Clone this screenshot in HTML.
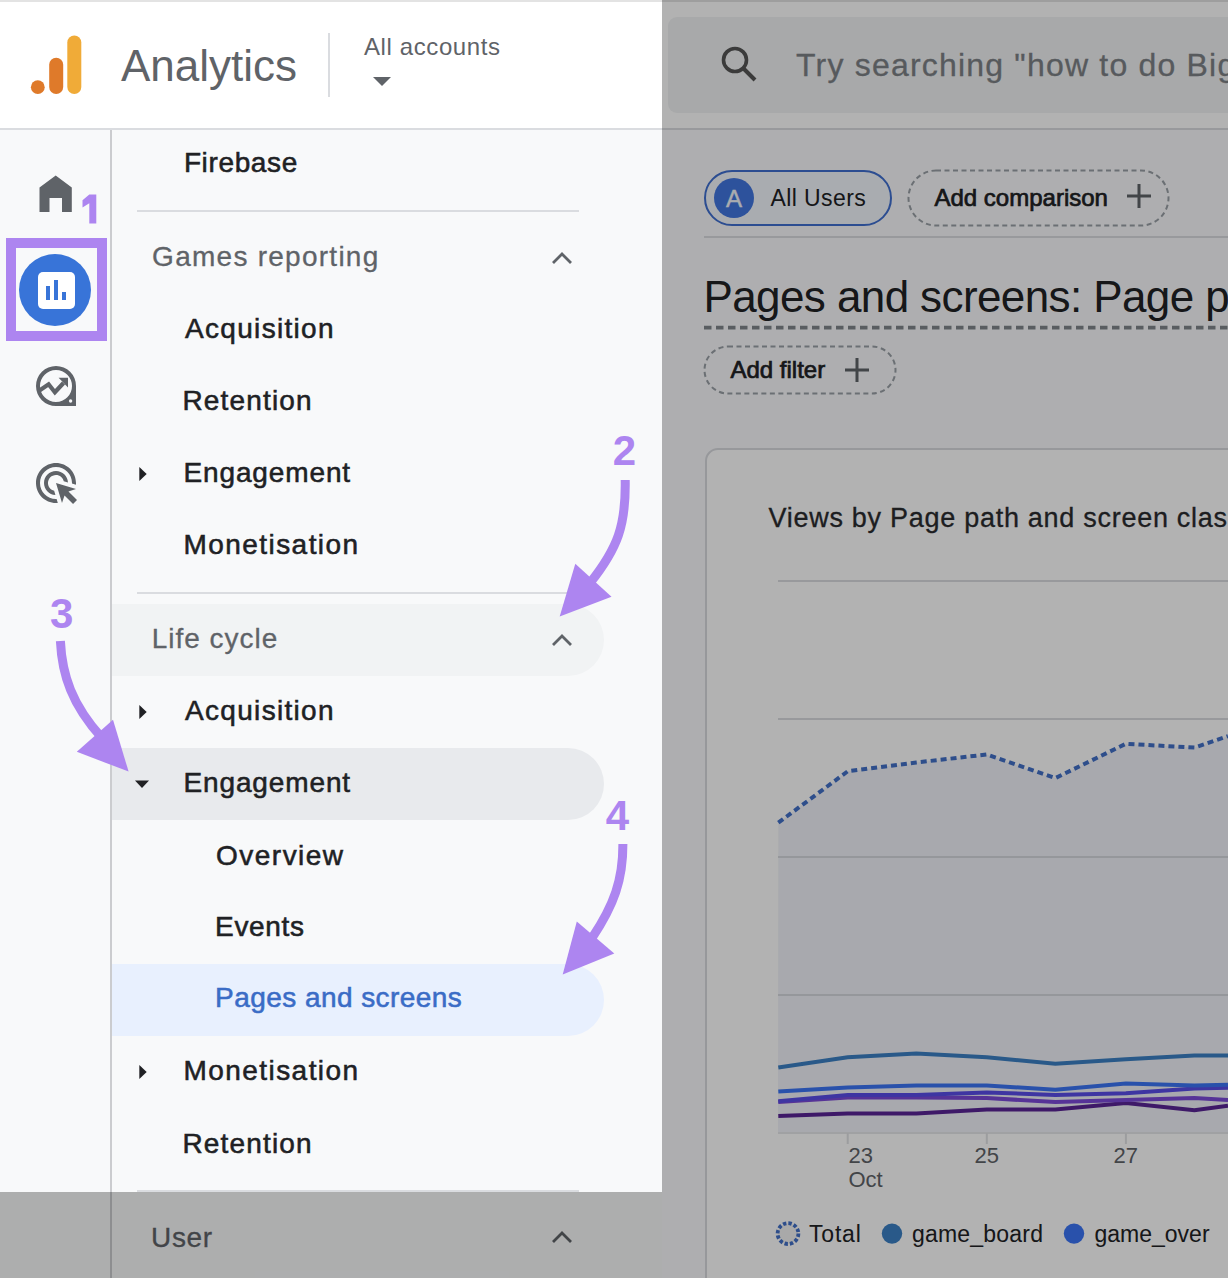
<!DOCTYPE html>
<html><head><meta charset="utf-8">
<style>
html,body{margin:0;padding:0;}
body{width:1228px;height:1278px;position:relative;overflow:hidden;background:#fff;font-family:"Liberation Sans",sans-serif;}
.a{position:absolute;}
.t{position:absolute;line-height:1;white-space:nowrap;}
.nav{color:#202124;font-size:28px;-webkit-text-stroke:0.55px currentColor;}
.sec{color:#5f6368;font-size:28px;-webkit-text-stroke:0.3px currentColor;}
</style></head>
<body>
<!-- ===== underlying page ===== -->
<!-- header -->
<div class="a" style="left:0;top:0;width:1228px;height:128px;background:#fff;"></div>
<div class="a" style="left:0;top:0;width:1228px;height:2px;background:#e3e3e3;"></div>
<div class="a" style="left:0;top:128px;width:1228px;height:2px;background:#dadce0;"></div>
<!-- logo -->
<svg class="a" style="left:0;top:0" width="100" height="128">
  <circle cx="37.8" cy="87.2" r="6.9" fill="#df7a2a"/>
  <rect x="49.2" y="57.8" width="14" height="36.3" rx="7" fill="#df7a2a"/>
  <rect x="67.3" y="35.5" width="14" height="58.6" rx="7" fill="#f0ab38"/>
</svg>
<div class="t" style="left:121px;top:44px;font-size:44px;color:#5f6368;">Analytics</div>
<div class="a" style="left:328px;top:33px;width:2px;height:64px;background:#dadce0;"></div>
<div class="t" style="left:364px;top:35px;font-size:24px;color:#5f6368;letter-spacing:0.6px">All accounts</div>
<svg class="a" style="left:370px;top:74px" width="24" height="16"><path d="M3 3 L21 3 L12 12 Z" fill="#5f6368"/></svg>
<!-- search box -->
<div class="a" style="left:668px;top:17px;width:600px;height:96px;border-radius:9px;background:#f1f3f4;"></div>
<svg class="a" style="left:715px;top:40px" width="48" height="48" viewBox="0 0 48 48">
  <circle cx="20" cy="20" r="11.5" fill="none" stroke="#555" stroke-width="3.6"/>
  <path d="M28.5 28.5 L40 40" stroke="#555" stroke-width="4"/>
</svg>
<div class="t" style="left:796px;top:49px;font-size:32px;color:#7d8186;letter-spacing:1.2px;-webkit-text-stroke:0.3px #7d8186">Try searching "how to do Big</div>

<!-- left rail -->
<div class="a" style="left:0;top:130px;width:110px;height:1148px;background:#f8f9fa;"></div>
<div class="a" style="left:110px;top:130px;width:2px;height:1148px;background:#cbcccf;"></div>
<!-- nav panel -->
<div class="a" style="left:112px;top:130px;width:550px;height:1148px;background:#f8f9fa;"></div>


<!-- rail icons -->
<svg class="a" style="left:39px;top:175px" width="34" height="38" viewBox="0 0 34 38">
  <path d="M0.5 12.5 L16.7 0.5 L32.8 12.5 L32.8 37 L23 37 L23 23 L10.5 23 L10.5 37 L0.5 37 Z" fill="#5f6368"/>
</svg>
<div class="a" style="left:19px;top:254px;width:72px;height:72px;border-radius:50%;background:#3874d8;"></div>
<div class="a" style="left:38px;top:271.5px;width:36.5px;height:37px;border-radius:5px;background:#fff;"></div>
<div class="a" style="left:46px;top:286px;width:4px;height:14px;background:#3874d8;"></div>
<div class="a" style="left:54.3px;top:279.7px;width:4px;height:20px;background:#3874d8;"></div>
<div class="a" style="left:62.1px;top:292px;width:4px;height:8px;background:#3874d8;"></div>
<svg class="a" style="left:36px;top:366px" width="40" height="40" viewBox="0 0 40 40">
  <path fill-rule="evenodd" fill="#5f6368" d="M40 20 A20 20 0 1 0 20 40 L37.5 40 Q40 40 40 37.5 Z M20 4 A16 16 0 1 0 20 36 A16 16 0 1 0 20 4 Z"/>
  <path d="M3.5 24.5 L12.6 18.3 L18.9 26.3 L27.5 17" fill="none" stroke="#5f6368" stroke-width="4.2"/>
  <path d="M22.6 11.8 L32 11.8 L32 21.5 Z" fill="#5f6368"/>
  <path fill="#5f6368" d="M30 40 L40 40 L40 30 Z"/>
  <circle cx="34.6" cy="35" r="1.7" fill="#f8f9fa"/>
</svg>
<svg class="a" style="left:32.3px;top:458.5px" width="48" height="48" viewBox="0 0 24 24">
  <path fill="#5f6368" d="M11.71 17.99C8.53 17.84 6 15.22 6 12c0-3.31 2.69-6 6-6 3.22 0 5.840 2.53 5.99 5.71l-2.1-.63C15.48 9.31 13.890 8 12 8c-2.21 0-4 1.79-4 4 0 1.89 1.31 3.48 3.08 3.89l.63 2.1zM22 12c0 .3-.01.6-.04.9l-1.97-.59c.01-.1.01-.21.01-.31 0-4.42-3.58-8-8-8s-8 3.58-8 8 3.58 8 8 8c.1 0 .21 0 .31-.01l.59 1.97c-.3.03-.6.04-.9.04-5.52 0-10-4.48-10-10S6.480 2 12 2s10 4.48 10 10zm-3.77 4.26L22 15l-10-3 3 10 1.26-3.77 4.27 4.27 1.97-1.970-4.27-4.27z"/>
</svg>

<!-- nav items -->
<div class="t nav" style="left:183.9px;top:149px;letter-spacing:0.63px;">Firebase</div>
<div class="a" style="left:137px;top:210px;width:442px;height:2px;background:#dadce0;"></div>
<div class="t sec" style="left:152.1px;top:242.9px;letter-spacing:1.26px;">Games reporting</div>
<svg class="a" style="left:546px;top:244px" width="32" height="28" viewBox="0 0 32 28"><path d="M7 19 L16 10 L25 19" fill="none" stroke="#5f6368" stroke-width="2.8"/></svg>
<div class="t nav" style="left:185.1px;top:315.3px;letter-spacing:1.3px;">Acquisition</div>
<div class="t nav" style="left:182.4px;top:387.3px;letter-spacing:1.17px;">Retention</div>
<svg class="a" style="left:130px;top:462px" width="24" height="28"><path d="M9.3 5 L16.7 12 L9.3 19 Z" fill="#202124"/></svg>
<div class="t nav" style="left:183.5px;top:459.2px;letter-spacing:0.87px;">Engagement</div>
<div class="t nav" style="left:183.5px;top:531px;letter-spacing:1.44px;">Monetisation</div>
<div class="a" style="left:137px;top:592px;width:442px;height:2px;background:#dadce0;"></div>
<div class="a" style="left:112px;top:604px;width:492px;height:72px;border-radius:0 36px 36px 0;background:#f1f3f4;"></div>
<div class="t sec" style="left:151.7px;top:625.1px;letter-spacing:1.0px;">Life cycle</div>
<svg class="a" style="left:546px;top:626px" width="32" height="28" viewBox="0 0 32 28"><path d="M7 19 L16 10 L25 19" fill="none" stroke="#5f6368" stroke-width="2.8"/></svg>
<svg class="a" style="left:130px;top:700px" width="24" height="28"><path d="M9.3 5 L16.7 12 L9.3 19 Z" fill="#202124"/></svg>
<div class="t nav" style="left:185.1px;top:697.3px;letter-spacing:1.3px;">Acquisition</div>
<div class="a" style="left:112px;top:748px;width:492px;height:72px;border-radius:0 36px 36px 0;background:#e8eaed;"></div>
<svg class="a" style="left:130px;top:772px" width="24" height="24"><path d="M5 8.6 L19 8.6 L12 16 Z" fill="#202124"/></svg>
<div class="t nav" style="left:183.5px;top:769.3px;letter-spacing:0.87px;">Engagement</div>
<div class="t nav" style="left:216.1px;top:841.8px;letter-spacing:1.47px;">Overview</div>
<div class="t nav" style="left:215.1px;top:913px;letter-spacing:0.66px;">Events</div>
<div class="a" style="left:112px;top:964px;width:492px;height:72px;border-radius:0 36px 36px 0;background:#e8f0fe;"></div>
<div class="t nav" style="left:215.1px;top:984.3px;letter-spacing:0.44px;color:#3a6cc6;">Pages and screens</div>
<svg class="a" style="left:130px;top:1060px" width="24" height="28"><path d="M9.3 5 L16.7 12 L9.3 19 Z" fill="#202124"/></svg>
<div class="t nav" style="left:183.5px;top:1057.3px;letter-spacing:1.44px;">Monetisation</div>
<div class="t nav" style="left:182.4px;top:1130px;letter-spacing:1.17px;">Retention</div>
<div class="a" style="left:137px;top:1190px;width:442px;height:2px;background:#dadce0;"></div>
<div class="t sec" style="left:151.1px;top:1223.8px;letter-spacing:0.6px;">User</div>
<svg class="a" style="left:546px;top:1223px" width="32" height="28" viewBox="0 0 32 28"><path d="M7 19 L16 10 L25 19" fill="none" stroke="#5f6368" stroke-width="2.8"/></svg>

<!-- main content -->
<div class="a" style="left:662px;top:130px;width:566px;height:1148px;background:#f9fafc;"></div>
<!-- chips -->
<div class="a" style="left:704px;top:170px;width:184px;height:52px;border:2px solid #3f6fd0;border-radius:28px;background:#f3f6fc;"></div>
<div class="a" style="left:714px;top:178px;width:40px;height:40px;border-radius:50%;background:#4176e0;"></div>
<div class="t" style="left:714px;top:186.7px;width:40px;text-align:center;font-size:24px;color:#f4f6fb;-webkit-text-stroke:0.4px #f4f6fb">A</div>
<div class="t" style="left:770.5px;top:186.5px;font-size:23px;color:#202124;letter-spacing:0.4px">All Users</div>
<svg class="a" style="left:907px;top:169px" width="263" height="58"><rect x="1.5" y="1.5" width="260" height="55" rx="27.5" fill="none" stroke="#9aa0a6" stroke-width="2" stroke-dasharray="5 3.5"/></svg>
<div class="t" style="left:934.5px;top:185.5px;font-size:24px;color:#202124;letter-spacing:0px;-webkit-text-stroke:0.7px #202124">Add comparison</div>
<svg class="a" style="left:1125px;top:182px" width="28" height="28"><path d="M14 2 V26 M2 14 H26" stroke="#5f6368" stroke-width="3"/></svg>
<div class="a" style="left:704px;top:236px;width:524px;height:2px;background:#dadce0;"></div>
<!-- title -->
<div class="t" style="left:703.5px;top:275.2px;font-size:44px;color:#202124;letter-spacing:-0.6px">Pages and screens: Page p</div>
<svg class="a" style="left:704px;top:324px" width="524" height="8"><path d="M0 3.6 H524" stroke="#80868b" stroke-width="3.6" stroke-dasharray="7.5 4.5"/></svg>
<svg class="a" style="left:703px;top:345px" width="194" height="50"><rect x="1.5" y="1.5" width="191" height="47" rx="23.5" fill="none" stroke="#9aa0a6" stroke-width="2" stroke-dasharray="5 3.5"/></svg>
<div class="t" style="left:730.5px;top:357.5px;font-size:24px;color:#202124;letter-spacing:0px;-webkit-text-stroke:0.7px #202124">Add filter</div>
<svg class="a" style="left:843px;top:356px" width="28" height="28"><path d="M14 2 V26 M2 14 H26" stroke="#5f6368" stroke-width="3"/></svg>
<!-- card -->
<div class="a" style="left:705px;top:448px;width:600px;height:900px;border:2px solid #d8dadf;border-radius:13px;background:#fff;"></div>
<div class="t" style="left:768.5px;top:504.5px;font-size:27px;color:#202124;letter-spacing:0.72px;-webkit-text-stroke:0.3px #2a2b2e;color:#2a2b2e">Views by Page path and screen clas</div>
<svg class="a" style="left:0;top:0" width="1228" height="1278">
  <g stroke="#dadce0" stroke-width="2">
    <path d="M778 581 H1228 M778 719 H1228 M778 857 H1228 M778 995 H1228"/>
  </g>
  <path d="M778.3 822.7 L847.7 771.3 L916.3 762.5 L986.8 754.5 L1055.3 778.1 L1125.9 743.8 L1194.4 747.6 L1228 736.2 L1228 1133 L778 1133 Z" fill="#f1f3f9"/>
  <path d="M778 857 H1228 M778 995 H1228" stroke="#d6d8de" stroke-width="2"/>
  <path d="M778 1133 H1228" stroke="#e6e7ea" stroke-width="2"/>
  <path d="M847.7 1133 V1144 M986.8 1133 V1144 M1125.9 1133 V1144" stroke="#e0e1e4" stroke-width="2"/>
  <path d="M778.3 822.7 L847.7 771.3 L916.3 762.5 L986.8 754.5 L1055.3 778.1 L1125.9 743.8 L1194.4 747.6 L1228 736.2" fill="none" stroke="#4270c8" stroke-width="4" stroke-dasharray="6 4"/>
  <path d="M778.3 1067.6 L847.7 1057.3 L916.3 1053.5 L986.8 1057.3 L1055.3 1063.8 L1125.9 1059.3 L1194.4 1055.4 L1228 1055.4" fill="none" stroke="#3c80c4" stroke-width="4"/>
  <path d="M778.3 1116 L847.7 1113.4 L916.3 1113.4 L986.8 1109.6 L1055.3 1109.6 L1125.9 1103 L1194.4 1110.3 L1228 1105.7" fill="none" stroke="#5a2596" stroke-width="4"/>
  <path d="M778.3 1102 L847.7 1097.4 L916.3 1097.4 L986.8 1098.1 L1055.3 1102 L1125.9 1100 L1194.4 1098.1 L1228 1100" fill="none" stroke="#7c4ad8" stroke-width="4"/>
  <path d="M778.3 1101.2 L847.7 1095 L916.3 1095 L986.8 1092.4 L1055.3 1095 L1125.9 1093.2 L1194.4 1088.6 L1228 1087.8" fill="none" stroke="#5a4de8" stroke-width="4"/>
  <path d="M778.3 1091.6 L847.7 1087.5 L916.3 1085.5 L986.8 1085.5 L1055.3 1089.7 L1125.9 1083.6 L1194.4 1085.5 L1228 1084.8" fill="none" stroke="#3c75f5" stroke-width="4"/>
  <circle cx="788" cy="1233.6" r="10.4" fill="#f2f2f2" stroke="#4270c8" stroke-width="3.8" stroke-dasharray="3.4 2.05"/>
  <circle cx="892" cy="1233.6" r="10.2" fill="#3c80c4"/>
  <circle cx="1074" cy="1233.6" r="10.2" fill="#3c75f5"/>
</svg>
<div class="t" style="left:848.5px;top:1145px;font-size:22px;color:#5f6368;">23</div>
<div class="t" style="left:848.5px;top:1169px;font-size:22px;color:#5f6368;">Oct</div>
<div class="t" style="left:974.5px;top:1145px;font-size:22px;color:#5f6368;">25</div>
<div class="t" style="left:1113.5px;top:1145px;font-size:22px;color:#5f6368;">27</div>
<div class="t" style="left:809px;top:1222.5px;font-size:23px;color:#202124;letter-spacing:0.8px">Total</div>
<div class="t" style="left:912px;top:1222.5px;font-size:23px;color:#202124;letter-spacing:0.2px">game_board</div>
<div class="t" style="left:1094.5px;top:1222.5px;font-size:23px;color:#202124;">game_over</div>


<!-- ===== scrim ===== -->
<div class="a" id="scrim1" style="left:662px;top:0;width:566px;height:1278px;background:rgba(0,0,0,0.3);"></div>
<div class="a" id="scrim2" style="left:0;top:1192px;width:662px;height:86px;background:rgba(0,0,0,0.3);"></div>

<!-- ===== annotations ===== -->
<div class="a" style="left:6px;top:238px;width:81px;height:83px;border:10px solid #ad85f0;"></div>
<svg class="a" style="left:0;top:0" width="120" height="240"><path d="M89.3 194.5 L96.3 194.5 L96.3 223.6 L89.3 223.6 L89.3 203.3 L82.5 207.5 L82.5 200.2 Z" fill="#ad85f0"/></svg>
<div class="t" style="left:612.7px;top:429.5px;font-size:42px;font-weight:bold;color:#ad85f0;">2</div>
<div class="t" style="left:50.1px;top:592.5px;font-size:42px;font-weight:bold;color:#ad85f0;">3</div>
<div class="t" style="left:605.8px;top:795.2px;font-size:42px;font-weight:bold;color:#ad85f0;">4</div>
<svg class="a" style="left:0;top:0" width="1228" height="1278">
  <g fill="none" stroke="#ad85f0" stroke-width="9">
    <path d="M625.2 480 C626 525 618 548 590 583"/>
    <path d="M60.4 641 C62 675 72 705 102 738"/>
    <path d="M622.9 844 C623 880 614 905 592 938"/>
  </g>
  <g fill="#ad85f0">
    <path d="M575.3 563.8 L611.5 596.7 L559.7 616.4 Z"/>
    <path d="M113 719.8 L76.8 751.8 L128.6 771.6 Z"/>
    <path d="M576.8 921.4 L614.3 953.5 L562.7 974.6 Z"/>
  </g>
</svg>
</body></html>
